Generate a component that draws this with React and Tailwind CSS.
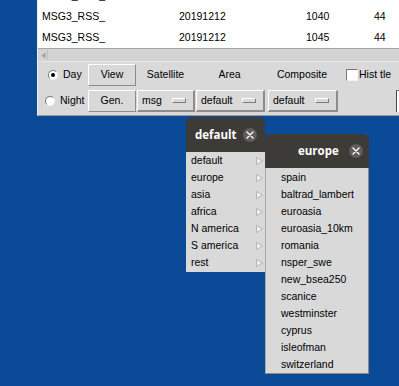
import React from 'react';

const raised = 'border border-t-white border-l-white border-r-[#8c8c8c] border-b-[#8c8c8c]';

const rows = [
  ['MSG3_RSS_', '20191212', '1035', '44'],
  ['MSG3_RSS_', '20191212', '1040', '44'],
  ['MSG3_RSS_', '20191212', '1045', '44'],
];

const areas = ['default', 'europe', 'asia', 'africa', 'N america', 'S america', 'rest'];
const europe = [
  'spain', 'baltrad_lambert', 'euroasia', 'euroasia_10km', 'romania', 'nsper_swe',
  'new_bsea250', 'scanice', 'westminster', 'cyprus', 'isleofman', 'switzerland',
];

function Radio({ checked }) {
  return (
    <div className="shrink-0 w-[10px] h-[10px] rounded-full bg-white border border-t-[#7a7a7a] border-l-[#7a7a7a] border-b-[#f4f4f4] border-r-[#f4f4f4] flex items-center justify-center">
      {checked && <div className="w-[4px] h-[4px] rounded-full bg-black" />}
    </div>
  );
}

function MenuButton({ label, w }) {
  return (
    <div className={`${w} shrink-0 h-[22px] ${raised} border-r-2 border-b-2 flex items-center justify-between pl-[4px] pr-[7px]`}>
      <span>{label}</span>
      <div className="w-[14px] h-[5px] bg-[#d9d9d9] border border-t-white border-l-white border-r-[#7c7c7c] border-b-[#7c7c7c]" />
    </div>
  );
}

function CloseBtn() {
  return (
    <div className="w-[14px] h-[14px] rounded-full bg-[#5f5d59] flex items-center justify-center">
      <svg width="8" height="8" viewBox="0 0 8 8">
        <path d="M1 1L7 7M7 1L1 7" stroke="#ffffff" strokeWidth="1.4" strokeLinecap="round" />
      </svg>
    </div>
  );
}

function Arrow() {
  return (
    <svg width="7" height="8" viewBox="0 0 7 8">
      <polygon points="0.5,0.5 6.5,4 0.5,7.5" fill="#f2f2f2" stroke="#a8a8a8" strokeWidth="0.8" />
    </svg>
  );
}

export default function App() {
  return (
    <div className="relative w-[399px] h-[386px] overflow-hidden bg-[#0a4a96] font-['Liberation_Sans',Arial,sans-serif] text-[10.5px] text-black">
      {/* main window */}
      <div className="absolute left-[37px] top-[-15px] w-[400px] flex flex-col bg-[#d9d9d9] border-l border-l-[#eeeeee] border-b border-b-[#9a9a9a]">
        <div className="bg-white">
          {rows.map((r, i) => (
            <div key={i} className="h-[21px] flex items-center pl-[4px]">
              <span className="w-[137px] shrink-0">{r[0]}</span>
              <span className="w-[127px] shrink-0">{r[1]}</span>
              <span className="w-[68px] shrink-0">{r[2]}</span>
              <span>{r[3]}</span>
            </div>
          ))}
        </div>

        {/* horizontal scrollbar */}
        <div className="h-[14px] bg-[#d3d3d3] border-t border-t-[#a6a6a6] border-b border-b-[#e8e8e8] flex items-center pl-[2px]">
          <div className="w-[8px] h-[10px] flex items-center justify-center border-r border-r-[#bdbdbd]">
            <svg width="5" height="7" viewBox="0 0 5 7">
              <polygon points="4.5,0.5 0.5,3.5 4.5,6.5" fill="#a0a0a0" />
            </svg>
          </div>
        </div>

        {/* control panel */}
        <div className="h-[53px] pt-[2px] flex flex-col gap-[4px]">
          <div className="flex items-center h-[22px]">
            <div className="w-[50px] shrink-0 flex items-center pl-[10px] gap-[5px]">
              <Radio checked />
              <span>Day</span>
            </div>
            <div className={`w-[48px] shrink-0 h-[22px] ${raised} flex items-center justify-center`}>View</div>
            <div className="w-[59px] shrink-0 text-center">Satellite</div>
            <div className="w-[69px] shrink-0 text-center">Area</div>
            <div className="w-[73px] shrink-0 pl-[3px] text-center">Composite</div>
            <div className="shrink-0 ml-[9px] w-[12px] h-[12px] bg-white border border-t-[#7a7a7a] border-l-[#7a7a7a] border-b-[#f4f4f4] border-r-[#f4f4f4]" />
            <span className="ml-[1px]">Hist tle</span>
          </div>
          <div className="flex items-center h-[22px]">
            <div className="w-[50px] shrink-0 flex items-center pl-[7px] gap-[5px]">
              <Radio />
              <span>Night</span>
            </div>
            <div className={`w-[48px] shrink-0 h-[22px] ${raised} flex items-center justify-center`}>Gen.</div>
            <div className="w-[1px] shrink-0" />
            <MenuButton label="msg" w="w-[58px]" />
            <div className="w-[1px] shrink-0" />
            <MenuButton label="default" w="w-[69px]" />
            <div className="w-[3px] shrink-0" />
            <MenuButton label="default" w="w-[70px]" />
            <div className="shrink-0 ml-[58px] w-[20px] h-[22px] bg-white border-l border-t border-l-[#444] border-t-[#777]" />
          </div>
        </div>
      </div>

      {/* area popup */}
      <div className="absolute left-[186px] top-[117px] w-[79px] flex flex-col">
        <div className="h-[35px] bg-[#3c3b37] rounded-t-[6px] flex items-center pl-[9px]">
          <span className="font-['Open_Sans',sans-serif] font-bold text-[11.5px] text-white">default</span>
          <div className="ml-[6px]"><CloseBtn /></div>
        </div>
        <div className="bg-[#d9d9d9] h-[120px]">
          {areas.map((a) => (
            <div key={a} className="h-[17px] flex items-center justify-between pl-[5px] pr-[2px]">
              <span>{a}</span>
              <Arrow />
            </div>
          ))}
        </div>
      </div>

      {/* europe popup */}
      <div className="absolute left-[265px] top-[134px] w-[104px] flex flex-col">
        <div className="h-[34px] bg-[#3c3b37] rounded-t-[6px] flex items-center pl-[33px]">
          <span className="font-['Open_Sans',sans-serif] font-bold text-[11.5px] text-white">europe</span>
          <div className="ml-[10px]"><CloseBtn /></div>
        </div>
        <div className="bg-[#d9d9d9] pt-[1px] border-l border-l-[#a9a9a9] border-r border-r-[#8a8a8a] border-b border-b-[#8a8a8a]">
          {europe.map((a) => (
            <div key={a} className="h-[17px] flex items-center pl-[15px]">{a}</div>
          ))}
        </div>
      </div>
    </div>
  );
}
